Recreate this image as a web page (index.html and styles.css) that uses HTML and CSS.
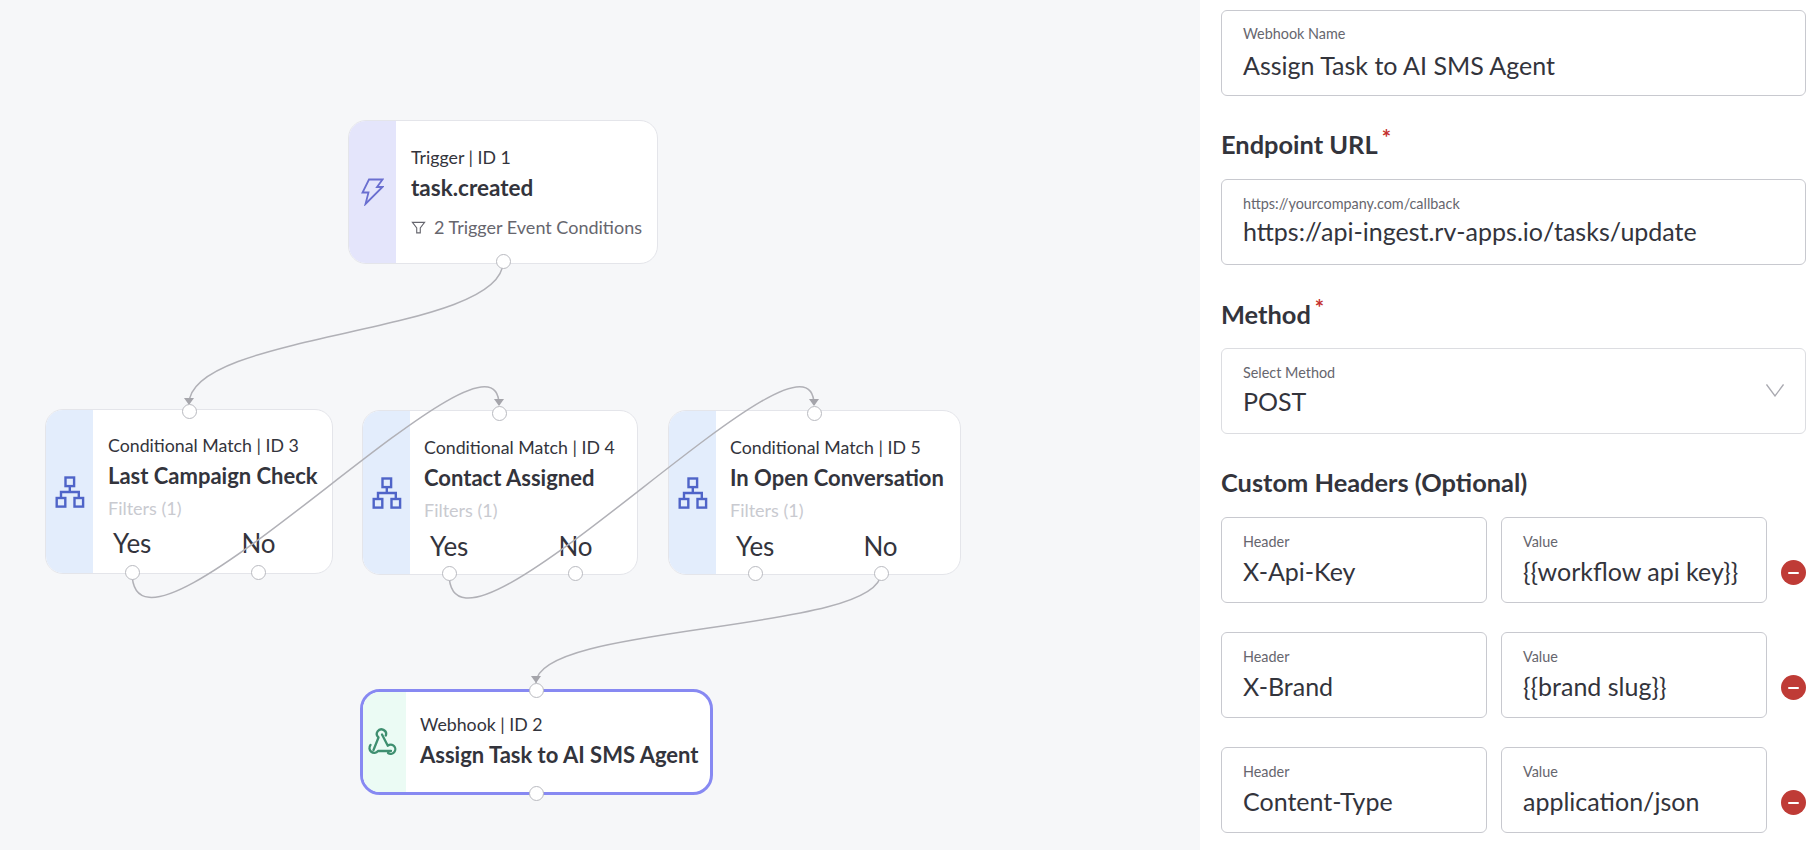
FILE: index.html
```html
<!DOCTYPE html>
<html lang="en">
<head>
<meta charset="utf-8">
<title>Webhook workflow</title>
<link rel="stylesheet" href="styles.css">
</head>
<body>
<div class="app">
  <main class="canvas">
    <article class="node node-trigger">
      <div class="strip strip-indigo">
        <svg class="ico" viewBox="0 0 23 28" width="23" height="28" fill="none" stroke="#6a6fd0" stroke-width="1.800"><path d="M8 1.500h13.500L16 9h5.500L4.500 26l3-11.500H1.500z"/></svg>
      </div>
      <div class="body">
        <div class="kind">Trigger | ID 1</div>
        <div class="title title-lg">task.created</div>
        <div class="cond">
          <svg viewBox="0 0 16 16" width="15" height="15" fill="none" stroke="#66666e" stroke-width="1.200"><path d="M1.500 2.500h13l-4.600 6v5.200H6.100V8.500z"/></svg>
          <span>2 Trigger Event Conditions</span>
        </div>
      </div>
    </article>

    <article class="node node-c3">
      <div class="strip strip-blue">
        <svg class="ico" viewBox="0 0 30 32" width="30" height="32" fill="none" stroke="#4f64c8" stroke-width="2.400"><rect x="10.500" y="1.500" width="8.600" height="8.600"/><rect x="1.700" y="22" width="8.600" height="8.600"/><rect x="19.500" y="22" width="8.600" height="8.600"/><path d="M14.800 10v6M6 22v-6h17.800v6"/></svg>
      </div>
      <div class="body body-first">
        <div class="kind">Conditional Match | ID 3</div>
        <div class="title">Last Campaign Check</div>
        <div class="filters">Filters (1)</div>
        <div class="branches"><span>Yes</span><span class="no">No</span></div>
      </div>
    </article>

    <article class="node node-c4">
      <div class="strip strip-blue">
        <svg class="ico" viewBox="0 0 30 32" width="30" height="32" fill="none" stroke="#4f64c8" stroke-width="2.400"><rect x="10.500" y="1.500" width="8.600" height="8.600"/><rect x="1.700" y="22" width="8.600" height="8.600"/><rect x="19.500" y="22" width="8.600" height="8.600"/><path d="M14.800 10v6M6 22v-6h17.800v6"/></svg>
      </div>
      <div class="body">
        <div class="kind">Conditional Match | ID 4</div>
        <div class="title">Contact Assigned</div>
        <div class="filters">Filters (1)</div>
        <div class="branches"><span>Yes</span><span class="no">No</span></div>
      </div>
    </article>

    <article class="node node-c5">
      <div class="strip strip-blue">
        <svg class="ico" viewBox="0 0 30 32" width="30" height="32" fill="none" stroke="#4f64c8" stroke-width="2.400"><rect x="10.500" y="1.500" width="8.600" height="8.600"/><rect x="1.700" y="22" width="8.600" height="8.600"/><rect x="19.500" y="22" width="8.600" height="8.600"/><path d="M14.800 10v6M6 22v-6h17.800v6"/></svg>
      </div>
      <div class="body">
        <div class="kind">Conditional Match | ID 5</div>
        <div class="title">In Open Conversation</div>
        <div class="filters">Filters (1)</div>
        <div class="branches"><span>Yes</span><span class="no">No</span></div>
      </div>
    </article>

    <article class="node node-hook">
      <div class="strip strip-green">
        <svg class="ico ico-hook" viewBox="0 0 30 28" width="30" height="28" fill="none" stroke="#3f8f70" stroke-width="2.300" stroke-linecap="round" stroke-linejoin="round"><path d="M6.500 22 11.500 9.500A4.600 4.600 0 1 1 18.800 7.500"/><path d="M15 6.500 20.800 17.700A4.600 4.600 0 1 1 21 25"/><path d="M24 23H11A4.800 4.800 0 0 1 3.500 17"/></svg>
      </div>
      <div class="body">
        <div class="kind">Webhook | ID 2</div>
        <div class="title">Assign Task to AI SMS Agent</div>
      </div>
    </article>

    <svg class="edges" width="1200" height="850" viewBox="0 0 1200 850" fill="none">
      <g stroke="#b1b1b7" stroke-width="1.500">
        <path d="M503 262C503 334 189 332 189 404"/>
        <path d="M132 572C132 700 499 298 499 405"/>
        <path d="M449 573C449 700 814 298 814 405"/>
        <path d="M881 573C881 633 536 623 536 683"/>
      </g>
      <g fill="#a5a5ab">
        <path d="M184 398h10l-5 7z"/>
        <path d="M494 399h10l-5 7z"/>
        <path d="M809 399h10l-5 7z"/>
        <path d="M531 676h10l-5 7z"/>
      </g>
    </svg>

    <span class="handle h-t1"></span>
    <span class="handle h-c3t"></span><span class="handle h-c3y"></span><span class="handle h-c3n"></span>
    <span class="handle h-c4t"></span><span class="handle h-c4y"></span><span class="handle h-c4n"></span>
    <span class="handle h-c5t"></span><span class="handle h-c5y"></span><span class="handle h-c5n"></span>
    <span class="handle h-wt"></span><span class="handle h-wb"></span>
  </main>

  <aside class="panel">
    <div class="field field-name"><label>Webhook Name</label><div class="value">Assign Task to AI SMS Agent</div></div>

    <h2 class="heading heading-tight">Endpoint URL<sup>*</sup></h2>
    <div class="field field-url"><label>https://yourcompany.com/callback</label><div class="value">https://api-ingest.rv-apps.io/tasks/update</div></div>

    <h2 class="heading">Method<sup>*</sup></h2>
    <div class="field field-select">
      <label>Select Method</label><div class="value">POST</div>
      <svg class="chev" viewBox="0 0 18 13" width="18" height="13" fill="none" stroke="#a9a9b0" stroke-width="1.300"><path d="M.5.500 9 12 17.500.500"/></svg>
    </div>

    <h2 class="heading heading-tight">Custom Headers (Optional)</h2>
    <div class="rows">
      <div class="row">
        <div class="field"><label>Header</label><div class="value">X-Api-Key</div></div>
        <div class="field"><label>Value</label><div class="value">{{workflow api key}}</div></div>
        <span class="remove"></span>
      </div>
      <div class="row">
        <div class="field"><label>Header</label><div class="value">X-Brand</div></div>
        <div class="field"><label>Value</label><div class="value">{{brand slug}}</div></div>
        <span class="remove"></span>
      </div>
      <div class="row">
        <div class="field"><label>Header</label><div class="value">Content-Type</div></div>
        <div class="field"><label>Value</label><div class="value">application/json</div></div>
        <span class="remove"></span>
      </div>
    </div>
  </aside>
</div>
</body>
</html>
```

FILE: styles.css
```css
* { box-sizing: border-box; }
html, body { margin: 0; height: 100%; overflow: hidden; }
body { font-family: Lato, "Noto Sans", sans-serif; color: #33343c; background: #fff; }
.app { display: flex; width: 1820px; height: 850px; }

.canvas { position: relative; width: 1200px; height: 850px; background: #f6f7f9; flex: none; }

.node { position: absolute; display: flex; background: #fff; border: 1px solid #e4e5ea; border-radius: 18px; overflow: hidden; }
.node-trigger { left: 348px; top: 120px; width: 310px; height: 144px; }
.node-c3 { left: 45px; top: 409px; width: 288px; height: 165px; }
.node-c4 { left: 362px; top: 410px; width: 276px; height: 165px; }
.node-c5 { left: 668px; top: 410px; width: 293px; height: 165px; }
.node-hook { left: 360px; top: 689px; width: 353px; height: 106px; border: 3px solid #8789f2; border-radius: 20px; }

.strip { flex: none; width: 47px; display: flex; align-items: center; justify-content: center; }
.strip-indigo { background: #e4e5fb; }
.strip-blue { background: #e3edfc; }
.strip-green { background: #ebfbf4; width: 43px; }
.ico { flex: none; }
.ico-hook { margin-right: 5px; }

.body { flex: 1; min-width: 0; padding: 25px 0 0 14px; display: flex; flex-direction: column; }
.body-first { padding: 24px 0 0 15px; }
.node-trigger .body { padding: 25px 0 0 15px; }
.node-hook .body { padding: 21px 0 0 14px; }
.kind { font-size: 17.750px; line-height: 22px; white-space: nowrap; }
.title { font-size: 22px; font-weight: 700; line-height: 28px; margin-top: 6px; white-space: nowrap; }
.title-lg { font-size: 22.500px; }
.cond { display: flex; align-items: center; gap: 8px; font-size: 18px; line-height: 24px; margin-top: 13px; color: #66666e; white-space: nowrap; }
.filters { font-size: 18px; line-height: 22px; margin-top: 7px; color: #c9cad0; }
.branches { display: flex; font-size: 26px; line-height: 30px; margin-top: 10px; padding-left: 6px; }
.branches .no { margin-left: 90px; }
.body-first .branches { padding-left: 5px; margin-top: 9px; }
.node-c5 .branches .no { margin-left: 89px; }

.edges { position: absolute; left: 0; top: 0; pointer-events: none; }

.handle { position: absolute; width: 15px; height: 15px; margin: -7.500px 0 0 -7.500px; border-radius: 50%; background: #fff; border: 1px solid #b9bac0; }
.h-t1 { left: 503px; top: 261px; }
.h-c3t { left: 189px; top: 411px; } .h-c3y { left: 132px; top: 572px; } .h-c3n { left: 258px; top: 572px; }
.h-c4t { left: 499px; top: 413px; } .h-c4y { left: 449px; top: 573px; } .h-c4n { left: 575px; top: 573px; }
.h-c5t { left: 814px; top: 413px; } .h-c5y { left: 755px; top: 573px; } .h-c5n { left: 881px; top: 573px; }
.h-wt { left: 536px; top: 690px; } .h-wb { left: 536px; top: 793px; }

.panel { flex: 1; padding: 10px 14px 0 21px; background: #fff; }
.field { position: relative; display: flex; flex-direction: column; height: 86px; padding: 15px 21px 0; border: 1px solid #c8c9cf; border-radius: 6px; background: #fff; }
.field label { font-size: 14.400px; line-height: 18px; color: #66666e; white-space: nowrap; }
.value { font-size: 25px; line-height: 32px; margin-top: 4px; color: #33343c; white-space: nowrap; }
.field-name { padding-top: 14px; }
.field-name .value { margin-top: 6px; }
.field-url .value { margin-top: 2px; }
.field-select { border-color: #dcdde1; }
.field-select .value { margin-top: 3px; }
.chev { position: absolute; right: 21px; top: 35px; }

.heading { margin: 0; height: 83px; padding-top: 33px; font-size: 25.400px; line-height: 32px; font-weight: 700; color: #33343c; }
.heading-tight { padding-top: 32px; }
.heading sup { font-size: 22px; line-height: 0; margin-left: 4px; color: #c4302b; font-weight: 700; vertical-align: 8px; }

.rows { display: flex; flex-direction: column; gap: 29px; }
.row { display: flex; gap: 14px; align-items: flex-start; }
.row .field { width: 266px; }
.remove { position: relative; flex: none; width: 25px; height: 25px; margin-top: 43px; border-radius: 50%; background: #bf3b36; }
.remove::after { content: ""; position: absolute; left: 7px; right: 7px; top: 11.500px; height: 2px; border-radius: 1px; background: #fff; }
```
